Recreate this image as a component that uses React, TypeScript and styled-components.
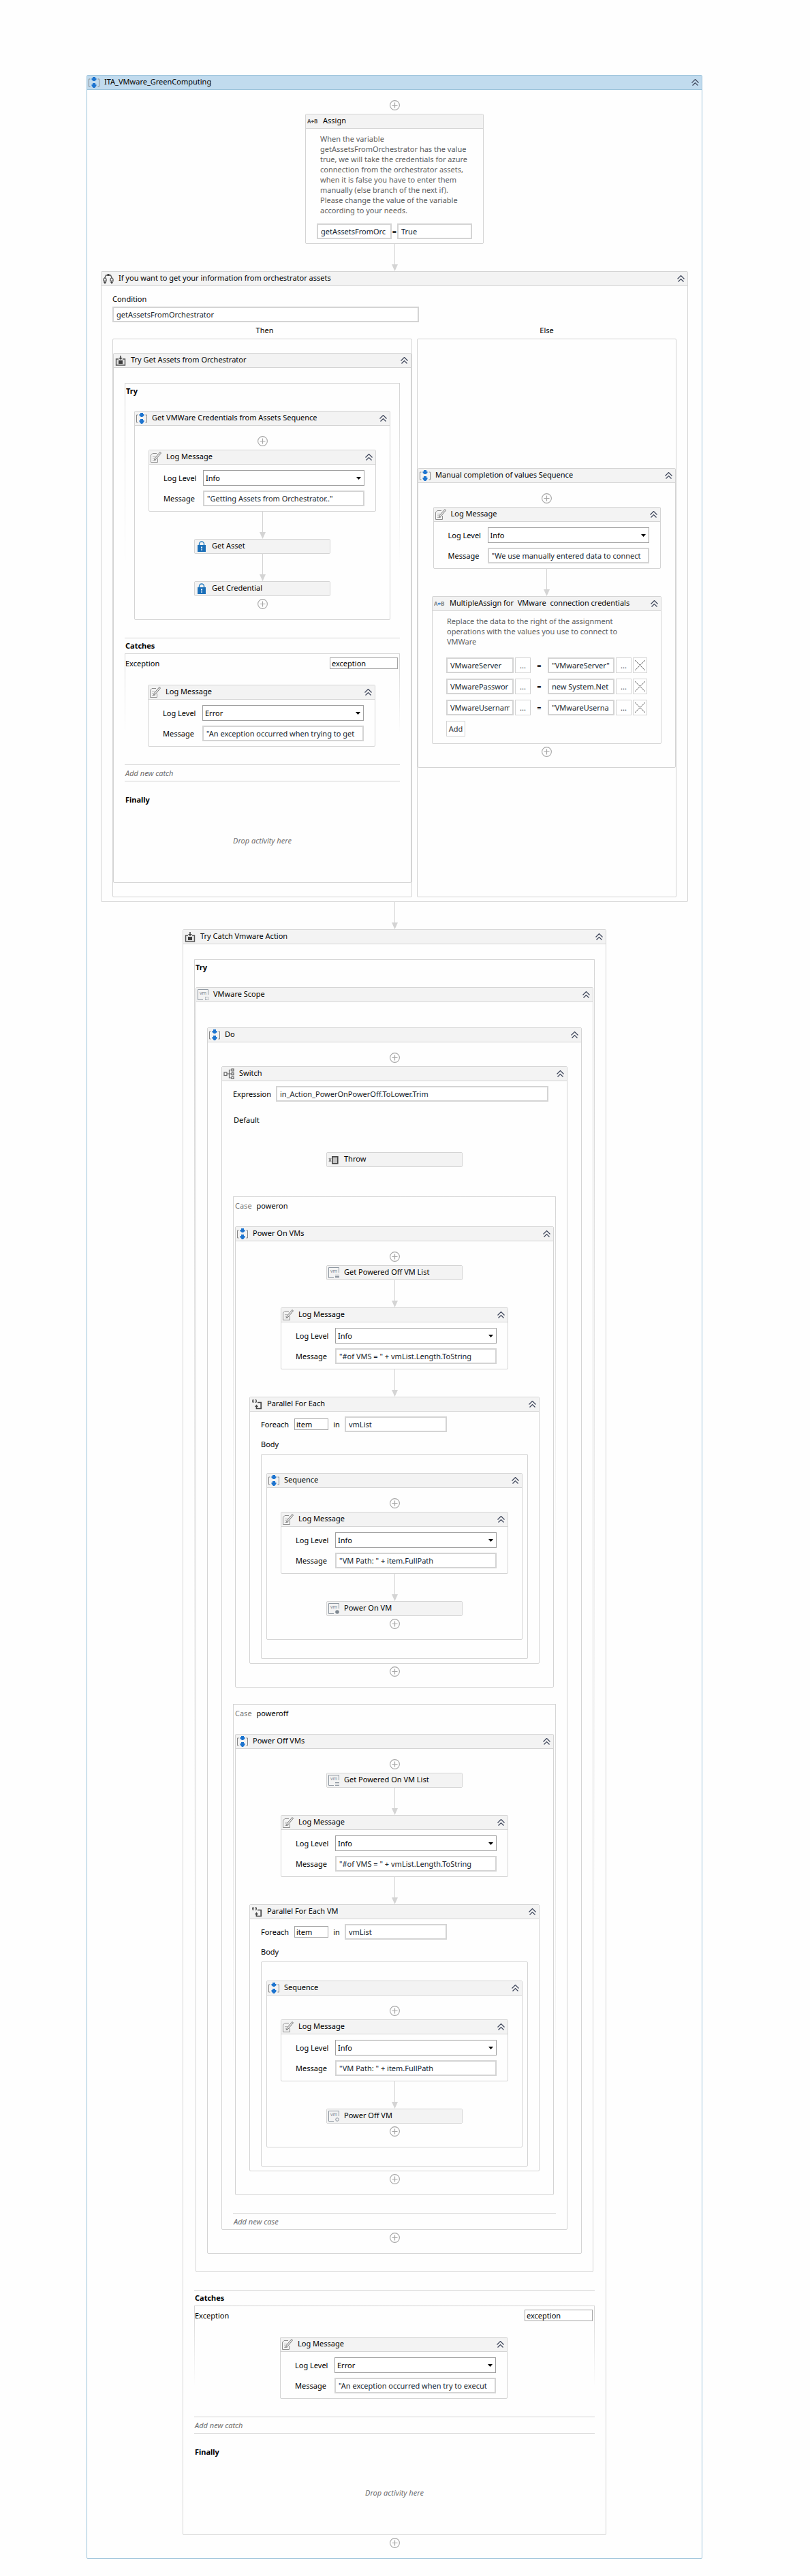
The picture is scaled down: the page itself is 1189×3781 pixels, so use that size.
import React, { useId } from "react";
import styled, { createGlobalStyle } from "styled-components";

const line = "#d4d4d4";

const GlobalStyle = createGlobalStyle`
  *, *::before, *::after { box-sizing: border-box; }
  body {
    margin: 0;
    background: #fefefe;
    color: #000;
    font-family: "Noto Sans", "Open Sans", sans-serif;
    font-size: 11px;
    line-height: 15px;
  }
  input, select, button { font: inherit; margin: 0; border-radius: 0; }
  svg { display: block; }
`;

/* ---------- frame ---------- */

const Page = styled.main`
  padding: 110px 158px 25px 127px;
`;

const Card = styled.section<{ $active?: boolean; $stretch?: boolean }>`
  width: ${(p) => (p.$stretch ? "100%" : "fit-content")};
  border: 1px solid ${(p) => (p.$active ? "#9cc3da" : line)};
  border-radius: 2px;
  background: #fefefe;
`;

const CardHeader = styled.header<{ $active?: boolean; $bare?: boolean }>`
  display: flex;
  align-items: center;
  gap: 7px;
  height: ${(p) => (p.$bare ? 20 : 21)}px;
  padding: 0 4px 0 2px;
  background: ${(p) => (p.$active ? "#c1dbee" : "#f3f3f3")};
  border-bottom: ${(p) => (p.$bare ? "0" : `1px solid ${p.$active ? "#9cc3da" : line}`)};
`;

const Title = styled.h2`
  flex: 1;
  margin: 0;
  font-size: 11px;
  font-weight: 400;
  line-height: 18px;
  padding-bottom: 2px;
  white-space: pre;
`;

const IconButton = styled.button`
  display: block;
  padding: 0;
  border: 0;
  background: none;
  color: #a6a6a6;
  cursor: pointer;
`;

const CollapseButton = styled(IconButton)`
  color: #3b4358;
`;

const Flow = styled.div`
  display: flex;
  flex-direction: column;
  align-items: center;
  padding: 15px 20px;
`;

const FlowSteps = styled.div`
  display: flex;
  flex-direction: column;
  align-items: center;
  width: 100%;
  padding: 5px 0 4px;
`;

const CompactCard = styled(Card)`
  width: 200px;
`;

/* ---------- text and fields ---------- */

const Label = styled.label`
  white-space: nowrap;
`;

const Note = styled.p`
  margin: 0;
  color: #5e5e5e;
`;

const Expression = styled.input`
  width: 100%;
  min-width: 0;
  height: 23px;
  padding: 0 4px;
  border: 2px solid ${line};
  background: #fff;
  color: #141e2e;
`;

const PlainInput = styled.input<{ $width: number }>`
  width: ${(p) => p.$width}px;
  height: 17px;
  padding: 0 2px;
  border: 1px solid #a5a5a5;
  background: #fff;
  color: #000;
`;

const SelectBox = styled.div`
  position: relative;
  svg {
    position: absolute;
    right: 5px;
    top: 10px;
    pointer-events: none;
  }
`;

const Select = styled.select`
  appearance: none;
  width: 100%;
  height: 23px;
  padding: 0 3px;
  border: 1px solid #a0a0a0;
  background: #fff;
  color: #000;
`;

const SmallButton = styled.button`
  display: grid;
  place-items: center;
  height: 23px;
  padding: 0;
  border: 1px solid ${line};
  background: #fff;
  color: #333;
`;

/* ---------- log message ---------- */

const LogFields = styled.div`
  display: grid;
  grid-template-columns: 58px 237px;
  align-items: center;
  row-gap: 7px;
  padding: 8px 16px 7px 21px;
`;

/* ---------- assign ---------- */

const AssignBody = styled.div`
  width: 260px;
  padding: 7px 16px 6px;
  ${Note} { padding-left: 5px; margin-bottom: 12px; }
`;

const AssignRow = styled.div`
  display: grid;
  grid-template-columns: 1fr 8px 1fr;
  align-items: center;
  text-align: center;
`;

const MultiBody = styled.div`
  width: 335px;
  padding: 7px 20px 10px;
  ${Note} { padding: 0 12px 0 1px; margin-bottom: 16px; }
`;

const MultiRow = styled.div`
  display: grid;
  grid-template-columns: 99px 23px 21px 1fr 23px 21px;
  gap: 2px;
  align-items: center;
  text-align: center;
  margin-bottom: 8px;
`;

const AddButton = styled(SmallButton)`
  width: 28px;
`;

/* ---------- if ---------- */

const IfBody = styled.div`
  padding: 8px 16px 6px;
`;

const Condition = styled.div`
  width: 450px;
  max-width: 100%;
  ${Label} { display: block; line-height: 22px; }
`;

const Branches = styled.div`
  display: grid;
  grid-template-columns: max-content 1fr;
`;

const BranchTitle = styled.h3`
  margin: 0;
  font-size: 11px;
  font-weight: 400;
  line-height: 24px;
  text-align: center;
`;

const Branch = styled.div<{ $gap?: boolean }>`
  display: flex;
  align-items: center;
  justify-content: center;
  padding: 20px 0;
  margin-right: ${(p) => (p.$gap ? 7 : 0)}px;
  border: 1px solid ${line};
  border-radius: 2px;
`;

/* ---------- try / catch ---------- */

const TryBody = styled.div`
  padding: 22px 16px 14px;
`;

const FadingBox = styled.div`
  display: flex;
  flex-direction: column;
  align-items: center;
  border: 1px solid transparent;
  border-bottom: 0;
  border-image: linear-gradient(${line}, transparent 72%) 1;
`;

const TryBox = styled(FadingBox)`
  min-width: 404px;
  padding: 0 1px 26px;
`;

const Heading = styled.h3`
  align-self: stretch;
  margin: 0;
  font-size: 11px;
  font-weight: 700;
  line-height: 22px;
`;

const TryHeading = styled(Heading)`
  margin-bottom: 18px;
`;

const CatchHeading = styled(Heading)`
  border-top: 1px solid ${line};
  padding-left: 1px;
`;

const FinallyHeading = styled(Heading)`
  margin-top: 16px;
  padding-left: 1px;
`;

const CatchBox = styled(FadingBox)`
  padding: 5px 2px 26px 0;
`;

const CatchRow = styled.div`
  display: flex;
  justify-content: space-between;
  align-items: center;
  width: 100%;
  margin-bottom: 23px;
`;

const AddLink = styled.button<{ $closed?: boolean }>`
  display: block;
  width: 100%;
  height: ${(p) => (p.$closed ? 25 : 24)}px;
  padding: 0 1px;
  border: 0 solid ${line};
  border-width: 1px 0 ${(p) => (p.$closed ? 1 : 0)}px;
  background: none;
  color: #6e6e6e;
  font-style: italic;
  text-align: left;
`;

const DropHint = styled.div`
  display: grid;
  place-items: center;
  height: 96px;
  color: #6e6e6e;
  font-style: italic;
`;

/* ---------- scope, switch, for each ---------- */

const ScopeBody = styled.div`
  padding: 37px 16px 26px;
`;

const SwitchBody = styled.div`
  display: flex;
  flex-direction: column;
  padding: 7px 16px 0;
`;

const SwitchExpression = styled.div`
  display: grid;
  grid-template-columns: 63px 400px;
  align-items: center;
`;

const DefaultCase = styled.div`
  display: flex;
  flex-direction: column;
  align-items: center;
  gap: 36px;
  padding: 16px 0 43px;
`;

const CaseTitle = styled.h3`
  align-self: stretch;
  margin: 0;
  padding-left: 1px;
  font-size: 11px;
  font-weight: 400;
  line-height: 22px;
`;

const CaseBox = styled(FadingBox)`
  padding: 2px 2px 24px;
  ${CaseTitle} { display: flex; gap: 7px; padding: 0 0 19px; }
`;

const Muted = styled.span`
  color: #777;
`;

const CaseList = styled.div`
  padding-bottom: 2px;
`;

const EachBody = styled.div`
  padding: 7px 16px 6px;
`;

const EachRow = styled.div`
  display: grid;
  grid-template-columns: 49px 50px 24px 150px;
  align-items: center;
  text-align: left;
  span { text-align: center; }
`;

const EachBox = styled.div`
  padding: 27px 7px;
  border: 1px solid ${line};
  border-radius: 2px;
`;

const BodyTitle = styled.h3`
  margin: 7px 0 3px;
  font-size: 11px;
  font-weight: 400;
  line-height: 22px;
`;

/* ---------- icons ---------- */

const SequenceIcon = () => (
  <svg width="16" height="16" viewBox="0 0 16 16">
    <path d="M2.5 3H.5v11h2M13.5 3h2v11h-2" fill="none" stroke="#858585" />
    <path d="M6 0h4v2h1.5v2L9 6H7L4.5 4V2H6zM6 9h4v2h1.5v2L9 16H7L4.500 13v-2H6z" fill="#1d74cf" />
  </svg>
);

const AssignIcon = ({ multi = false }: { multi?: boolean }) => (
  <svg width="16" height="16" viewBox="0 0 16 16" fontFamily="Noto Sans, sans-serif" fontSize="8" fontWeight="700">
    <text x="0" y="11" fill={multi ? "#808080" : "#555"}>A</text>
    <path d="M5.5 8.2L8 6v1.500h2.200v1.400H8v1.500z" fill={multi ? "#1d74cf" : "#555"} />
    <text x="10" y="11" fill={multi ? "#808080" : "#555"}>B</text>
  </svg>
);

const IfIcon = () => (
  <svg width="16" height="16" viewBox="0 0 16 16" fill="none" stroke="#555" strokeWidth="1.3">
    <path d="M8 3H4.5L3 6.5M8 3h3.5L13 6.5" />
    <rect x="6.5" y="1" width="3" height="3" fill="#444" stroke="none" />
    <path d="M3 6.5l2 2v3H1v-3zM13 6.5l2 2v3h-4v-3zM3 11.5V14M13 11.5V14" />
    <path d="M1 13h4l-2 3zM11 13h4l-2 3z" fill="#444" stroke="none" />
  </svg>
);

const TryIcon = () => (
  <svg width="16" height="16" viewBox="0 0 16 16">
    <path d="M5 6H1.5v9h13V6H11" fill="#e2e2e2" stroke="#555" strokeWidth="1.4" />
    <rect x="5" y="8" width="6" height="5" fill="#3c3c3c" />
    <path d="M7.2 1h1.6v3H11L8 7 5 4h2.2z" fill="#444" />
  </svg>
);

const LogIcon = () => (
  <svg width="16" height="16" viewBox="0 0 16 16" fill="none" stroke="#8c8c8c">
    <path d="M9 2.5H3L.5 5v10.500h10V10" />
    <path d="M3 7.5h4M3 10h2M3 12.500h5" stroke="#b5b5b5" />
    <path d="M14 .5l1.500 1.500L8 11l-2.500 1.500.7-3z" fill="#e9e9e9" stroke="#777" />
  </svg>
);

const LockIcon = () => (
  <svg width="16" height="16" viewBox="0 0 16 16">
    <path d="M4.5 7V4.500a3.500 3.500 0 0 1 7 0V7" fill="none" stroke="#2a7fc1" strokeWidth="1.5" />
    <rect x="2" y="6" width="12" height="10" fill="#1b6fb8" />
    <path d="M7 8.500h2v2H7zM7.400 11.500h1.200V14H7.400z" fill="#fff" />
  </svg>
);

type VmKind = "scope" | "list" | "on" | "off";

const VmIcon = ({ kind }: { kind: VmKind }) => (
  <svg width="16" height="16" viewBox="0 0 16 16" fill="none" stroke="#8d96a0">
    <path d="M15.5 8V.5H.5v15H8" />
    <text x="3" y="7.500" fill="#7b8590" stroke="none" fontSize="7" fontFamily="Noto Sans, sans-serif">vm</text>
    {kind === "scope" && <rect x="11.5" y="11.5" width="4" height="4" strokeDasharray="2 1" />}
    {kind === "list" && <path d="M10 11.5h6M10 13.500h6M10 15.500h6" />}
    {kind === "on" && <circle cx="13" cy="13" r="2.8" fill="#7f8891" stroke="none" />}
    {kind === "off" && <circle cx="13" cy="13" r="2.3" />}
  </svg>
);

const SwitchIcon = () => (
  <svg width="16" height="16" viewBox="0 0 16 16" fill="none" stroke="#666" strokeWidth="1.2">
    <rect x="1" y="6" width="4" height="4.5" />
    <path d="M5 8.200h7M12 2.500H8.500v11.500H12" />
    <rect x="12" y="1" width="3" height="3" />
    <rect x="12" y="6.7" width="3" height="3" />
    <rect x="12" y="12.4" width="3" height="3" />
  </svg>
);

const ThrowIcon = () => (
  <svg width="16" height="16" viewBox="0 0 16 16">
    <path d="M1 6l3 5M4 6l-3 5" stroke="#888" strokeWidth="1.5" />
    <rect x="5.8" y="3.8" width="8" height="10" fill="#c4c4c4" stroke="#444" strokeWidth="1.6" />
  </svg>
);

const ParallelIcon = () => (
  <svg width="16" height="16" viewBox="0 0 16 16" fill="none" stroke="#444">
    <rect x="1.5" y="1.5" width="2" height="4" rx="1" />
    <rect x="5.5" y="1.5" width="2" height="4" rx="1" />
    <path d="M9 5.500h5.200v9H7.500V11" strokeWidth="1.7" />
    <path d="M5 12l2.500-3.500L10 12z" fill="#444" stroke="none" />
  </svg>
);

const ChevronIcon = () => (
  <svg width="11" height="10" viewBox="0 0 11 10" fill="none" stroke="currentColor" strokeWidth="1.2">
    <path d="M.5 5.500l5-5 5 5M1.500 9.500l4-4 4 4" />
  </svg>
);

const PlusIcon = () => (
  <svg width="15" height="15" viewBox="0 0 15 15" fill="none" stroke="currentColor">
    <circle cx="7.5" cy="7.5" r="6.9" strokeWidth="1.1" />
    <path d="M7.5 3.500v8M3.500 7.500h8" strokeWidth="1.2" />
  </svg>
);

const Arrow = () => (
  <svg width="9" height="40" viewBox="0 0 9 40">
    <path d="M4.5 0v31" stroke={line} />
    <path d="M0 30h9L4.500 40z" fill={line} />
  </svg>
);

/* ---------- building blocks ---------- */

type ActivityProps = {
  icon: React.ReactNode;
  title: string;
  active?: boolean;
  stretch?: boolean;
  collapsible?: boolean;
  children: React.ReactNode;
};

const Activity = ({ icon, title, active, stretch, collapsible = true, children }: ActivityProps) => (
  <Card $active={active} $stretch={stretch}>
    <CardHeader $active={active}>
      {icon}
      <Title>{title}</Title>
      {collapsible && (
        <CollapseButton type="button" aria-label={`Collapse ${title}`}>
          <ChevronIcon />
        </CollapseButton>
      )}
    </CardHeader>
    {children}
  </Card>
);

const Compact = ({ icon, title }: { icon: React.ReactNode; title: string }) => (
  <CompactCard>
    <CardHeader $bare>
      {icon}
      <Title>{title}</Title>
    </CardHeader>
  </CompactCard>
);

const AddActivity = () => (
  <IconButton type="button" aria-label="Add activity">
    <PlusIcon />
  </IconButton>
);

type SequenceProps = { title: string; active?: boolean; stretch?: boolean; children: React.ReactNode };

const Sequence = ({ title, active, stretch, children }: SequenceProps) => (
  <Activity icon={<SequenceIcon />} title={title} active={active} stretch={stretch}>
    <Flow>
      <AddActivity />
      <FlowSteps>
        {React.Children.toArray(children).map((step, i) => (
          <React.Fragment key={i}>
            {i > 0 && <Arrow />}
            {step}
          </React.Fragment>
        ))}
      </FlowSteps>
      <AddActivity />
    </Flow>
  </Activity>
);

const LogMessage = ({ level = "Info", message }: { level?: string; message: string }) => {
  const id = useId();
  return (
    <Activity icon={<LogIcon />} title="Log Message">
      <LogFields>
        <Label htmlFor={`${id}-level`}>Log Level</Label>
        <SelectBox>
          <Select id={`${id}-level`} defaultValue={level}>
            <option>{level}</option>
          </Select>
          <svg width="7" height="4" viewBox="0 0 7 4">
            <path d="M0 0h7L3.500 4z" />
          </svg>
        </SelectBox>
        <Label htmlFor={`${id}-message`}>Message</Label>
        <Expression id={`${id}-message`} defaultValue={message} />
      </LogFields>
    </Activity>
  );
};

const Assign = () => (
  <Activity icon={<AssignIcon />} title="Assign" collapsible={false}>
    <AssignBody>
      <Note>
        When the variable getAssetsFromOrchestrator has the value true, we will take the credentials for azure
        connection from the orchestrator assets, when it is false you have to enter them manually (else branch of the
        next if). Please change the value of the variable according to your needs.
      </Note>
      <AssignRow>
        <Expression aria-label="To" defaultValue="getAssetsFromOrc" />
        <span>=</span>
        <Expression aria-label="Value" defaultValue="True" />
      </AssignRow>
    </AssignBody>
  </Activity>
);

const assignments = [
  ["VMwareServer", '"VMwareServer"'],
  ["VMwarePasswor", "new System.Net"],
  ["VMwareUsernam", '"VMwareUserna'],
];

const MultipleAssign = () => (
  <Activity icon={<AssignIcon multi />} title="MultipleAssign for  VMware  connection credentials">
    <MultiBody>
      <Note>
        Replace the data to the right of the assignment operations with the values you use to connect to VMWare
      </Note>
      {assignments.map(([to, value]) => (
        <MultiRow key={to}>
          <Expression aria-label="To" defaultValue={to} />
          <SmallButton type="button">...</SmallButton>
          <span>=</span>
          <Expression aria-label="Value" defaultValue={value} />
          <SmallButton type="button">...</SmallButton>
          <SmallButton type="button" aria-label={`Remove ${to}`}>
            <svg width="15" height="15" viewBox="0 0 15 15" stroke="#777">
              <path d="M0 0l15 15M15 0L0 15" />
            </svg>
          </SmallButton>
        </MultiRow>
      ))}
      <AddButton type="button">Add</AddButton>
    </MultiBody>
  </Activity>
);

const TryCatch = ({ title, message, children }: { title: string; message: string; children: React.ReactNode }) => {
  const id = useId();
  return (
    <Activity icon={<TryIcon />} title={title}>
      <TryBody>
        <TryBox>
          <TryHeading>Try</TryHeading>
          {children}
        </TryBox>
        <CatchHeading>Catches</CatchHeading>
        <CatchBox>
          <CatchRow>
            <Label htmlFor={id}>Exception</Label>
            <PlainInput id={id} $width={100} defaultValue="exception" />
          </CatchRow>
          <LogMessage level="Error" message={message} />
        </CatchBox>
        <AddLink type="button" $closed>
          Add new catch
        </AddLink>
        <FinallyHeading>Finally</FinallyHeading>
        <DropHint>Drop activity here</DropHint>
      </TryBody>
    </Activity>
  );
};

const ForEach = ({ title, children }: { title: string; children: React.ReactNode }) => {
  const id = useId();
  return (
    <Activity icon={<ParallelIcon />} title={title}>
      <EachBody>
        <EachRow>
          <Label htmlFor={id}>Foreach</Label>
          <PlainInput id={id} $width={50} defaultValue="item" />
          <span>in</span>
          <Expression aria-label="in" defaultValue="vmList" />
        </EachRow>
        <BodyTitle>Body</BodyTitle>
        <EachBox>{children}</EachBox>
      </EachBody>
    </Activity>
  );
};

type PowerCaseProps = { name: string; title: string; list: string; loop: string; action: string; kind: VmKind };

const PowerCase = ({ name, title, list, loop, action, kind }: PowerCaseProps) => (
  <CaseBox>
    <CaseTitle>
      <Muted>Case</Muted>
      {name}
    </CaseTitle>
    <Sequence title={title}>
      <Compact icon={<VmIcon kind="list" />} title={list} />
      <LogMessage message={'"#of VMS = " + vmList.Length.ToString'} />
      <ForEach title={loop}>
        <Sequence title="Sequence">
          <LogMessage message={'"VM Path: " + item.FullPath'} />
          <Compact icon={<VmIcon kind={kind} />} title={action} />
        </Sequence>
      </ForEach>
    </Sequence>
  </CaseBox>
);

const OrchestratorIf = () => (
  <Activity icon={<IfIcon />} title="If you want to get your information from orchestrator assets" stretch>
    <IfBody>
      <Condition>
        <Label htmlFor="condition">Condition</Label>
        <Expression id="condition" defaultValue="getAssetsFromOrchestrator" />
      </Condition>
      <Branches>
        <BranchTitle>Then</BranchTitle>
        <BranchTitle>Else</BranchTitle>
        <Branch $gap>
          <TryCatch
            title="Try Get Assets from Orchestrator"
            message={'"An exception occurred when trying to get'}
          >
            <Sequence title="Get VMWare Credentials from Assets Sequence">
              <LogMessage message={'"Getting Assets from Orchestrator.."'} />
              <Compact icon={<LockIcon />} title="Get Asset" />
              <Compact icon={<LockIcon />} title="Get Credential" />
            </Sequence>
          </TryCatch>
        </Branch>
        <Branch>
          <Sequence title="Manual completion of values Sequence" stretch>
            <LogMessage message={'"We use manually entered data to connect'} />
            <MultipleAssign />
          </Sequence>
        </Branch>
      </Branches>
    </IfBody>
  </Activity>
);

const PowerSwitch = () => (
  <Activity icon={<SwitchIcon />} title="Switch">
    <SwitchBody>
      <SwitchExpression>
        <Label htmlFor="expression">Expression</Label>
        <Expression id="expression" defaultValue="in_Action_PowerOnPowerOff.ToLower.Trim" />
      </SwitchExpression>
      <DefaultCase>
        <CaseTitle>Default</CaseTitle>
        <Compact icon={<ThrowIcon />} title="Throw" />
      </DefaultCase>
      <CaseList>
        <PowerCase
          name="poweron"
          title="Power On VMs"
          list="Get Powered Off VM List"
          loop="Parallel For Each"
          action="Power On VM"
          kind="on"
        />
        <PowerCase
          name="poweroff"
          title="Power Off VMs"
          list="Get Powered On VM List"
          loop="Parallel For Each VM"
          action="Power Off VM"
          kind="off"
        />
      </CaseList>
      <AddLink type="button">Add new case</AddLink>
    </SwitchBody>
  </Activity>
);

export default function App() {
  return (
    <>
      <GlobalStyle />
      <Page>
        <Sequence title="ITA_VMware_GreenComputing" active stretch>
          <Assign />
          <OrchestratorIf />
          <TryCatch title="Try Catch Vmware Action" message={'"An exception occurred when try to execut'}>
            <Activity icon={<VmIcon kind="scope" />} title="VMware Scope">
              <ScopeBody>
                <Sequence title="Do">
                  <PowerSwitch />
                </Sequence>
              </ScopeBody>
            </Activity>
          </TryCatch>
        </Sequence>
      </Page>
    </>
  );
}
